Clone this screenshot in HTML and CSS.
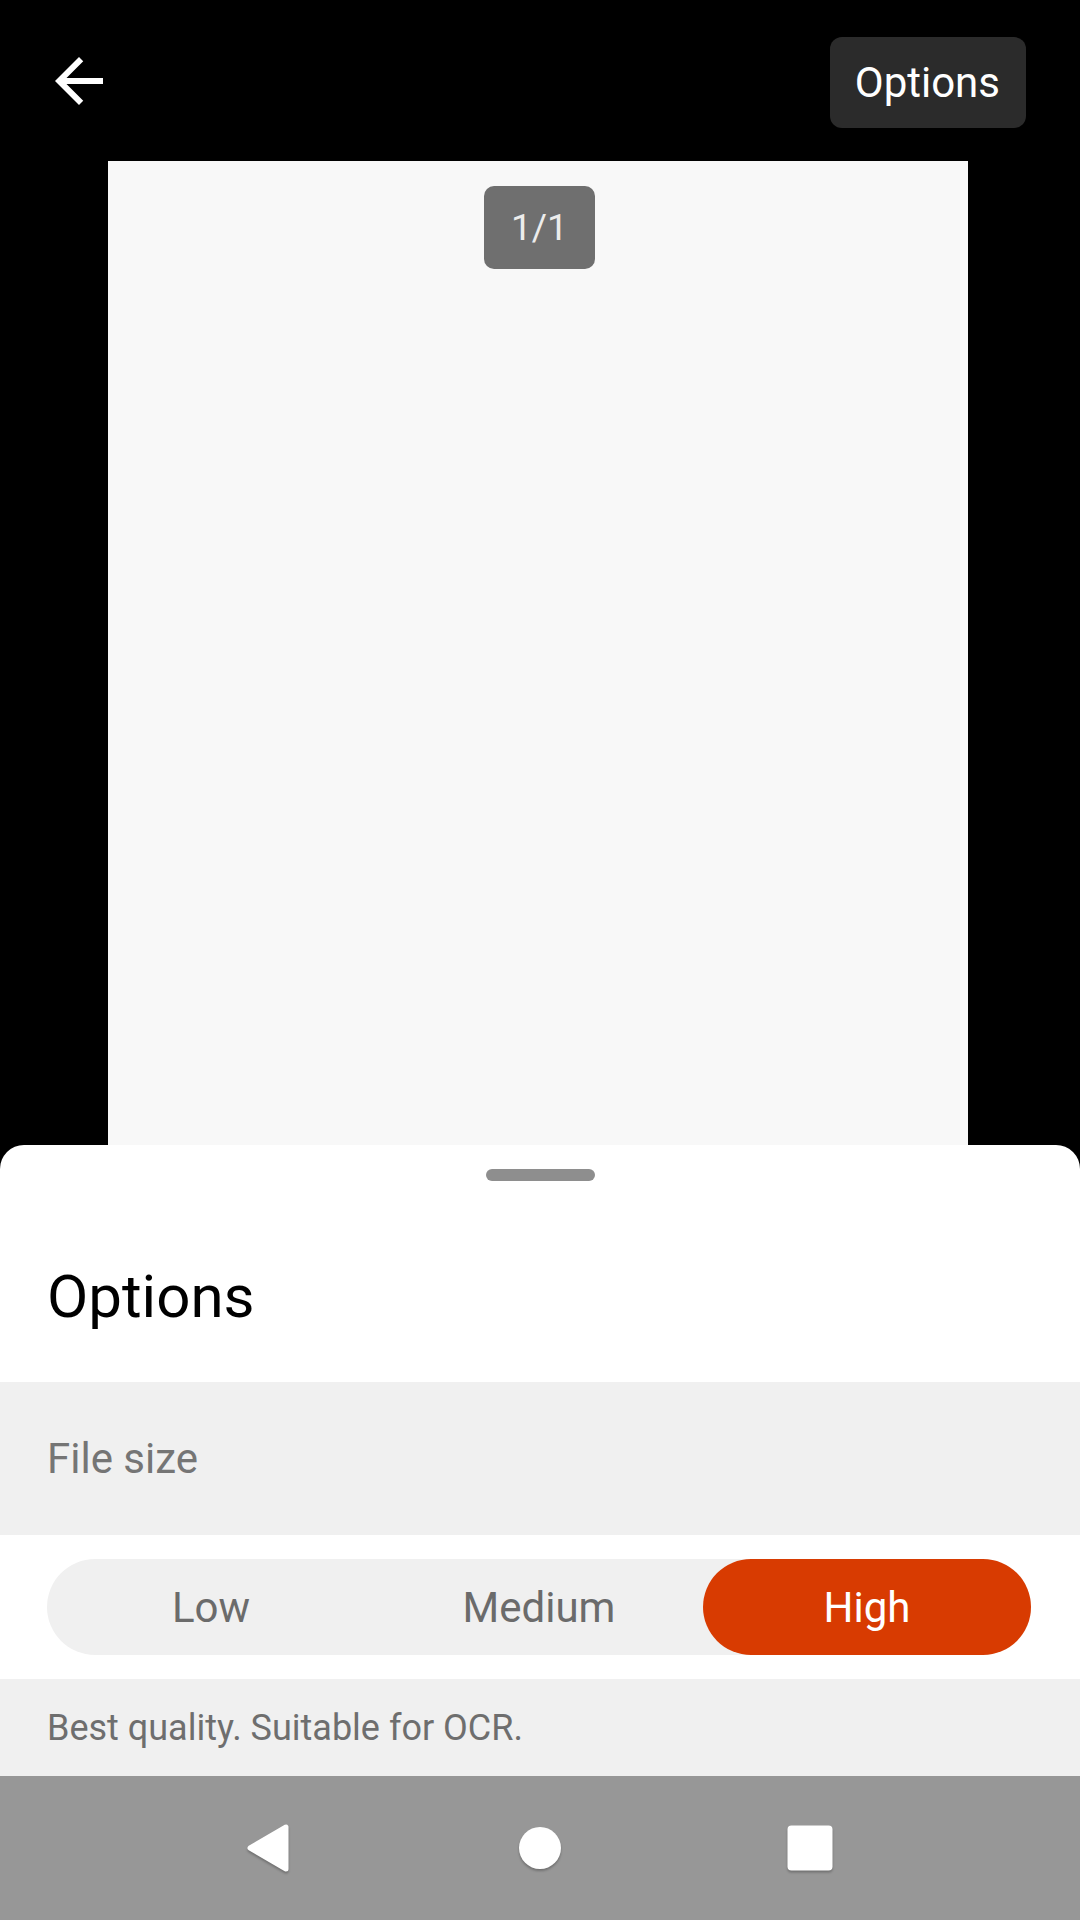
FILE: index.html
```html
<!DOCTYPE html>
<html lang="en">
<head>
<meta charset="utf-8">
<title>Options</title>
<link rel="stylesheet" href="styles.css">
</head>
<body>
<div class="screen">
  <header class="topbar">
    <svg class="back" viewBox="0 0 24 24" width="72" height="72" aria-label="Back">
      <path d="M20 11H7.83l5.59-5.59L12 4l-8 8 8 8 1.41-1.41L7.83 13H20v-2z" fill="#fff"/>
    </svg>
    <div class="options-btn">Options</div>
  </header>
  <main class="viewer">
    <div class="page">
      <div class="badge">1/1</div>
    </div>
  </main>
  <section class="sheet">
    <div class="handle-wrap"><div class="handle"></div></div>
    <h1 class="sheet-title">Options</h1>
    <div class="section-label">File size</div>
    <div class="segment-row">
      <div class="segmented">
        <div class="seg">Low</div>
        <div class="seg">Medium</div>
        <div class="seg active">High</div>
      </div>
    </div>
    <div class="desc">Best quality. Suitable for OCR.</div>
  </section>
  <nav class="navbar">
    <svg class="nav-icon" viewBox="0 0 48 48" width="48" height="48"><polygon points="40,3 40,45 4,24" fill="#fff" stroke="#fff" stroke-width="5" stroke-linejoin="round"/></svg>
    <svg class="nav-icon" viewBox="0 0 48 48" width="48" height="48"><circle cx="24" cy="24" r="21" fill="#fff"/></svg>
    <svg class="nav-icon" viewBox="0 0 48 48" width="48" height="48"><rect x="1.5" y="1.5" width="45" height="45" rx="4" fill="#fff"/></svg>
  </nav>
</div>
</body>
</html>
```

FILE: styles.css
```css
* { box-sizing: border-box; }
html, body {
  margin: 0;
  padding: 0;
  background: #000;
  font-family: Roboto, "Noto Sans", "Liberation Sans", sans-serif;
}
.screen {
  width: 1080px;
  height: 1920px;
  display: flex;
  flex-direction: column;
  overflow: hidden;
}
.topbar {
  height: 161px;
  flex: none;
  display: flex;
  align-items: center;
  justify-content: space-between;
  padding: 0 54px 0 43px;
}
.back { display: block; }
.options-btn {
  height: 91px;
  margin-top: 3px;
  padding: 0 26px 0 25px;
  background: #2b2b2b;
  border-radius: 12px;
  color: #fff;
  font-size: 42px;
  display: flex;
  align-items: center;
}
.viewer {
  flex: 1;
  display: flex;
  padding-left: 108px;
}
.page {
  width: 860px;
  background: #f8f8f8;
  display: flex;
  flex-direction: column;
  align-items: center;
  padding-top: 25px;
}
.badge {
  width: 111px;
  height: 83px;
  border-radius: 10px;
  background: #6f6f6f;
  color: #ececec;
  font-size: 37px;
  display: flex;
  align-items: center;
  justify-content: center;
  margin-left: 3px;
}
.sheet {
  flex: none;
  height: 631px;
  background: #fff;
  border-radius: 24px 24px 0 0;
  display: flex;
  flex-direction: column;
}
.handle-wrap {
  height: 36px;
  padding-top: 24px;
  display: flex;
  justify-content: center;
}
.handle {
  width: 109px;
  height: 12px;
  border-radius: 6px;
  background: #8e8e8e;
}
.sheet-title {
  margin: 79px 0 48px 47px;
  font-size: 60px;
  line-height: 74px;
  font-weight: 400;
  color: #000;
}
.section-label {
  height: 153px;
  background: #f0f0f0;
  color: #757575;
  font-size: 42px;
  display: flex;
  align-items: center;
  padding-left: 47px;
}
.segment-row {
  height: 144px;
  padding: 24px 49px 24px 47px;
  background: #fff;
}
.segmented {
  height: 96px;
  background: #f0f0f0;
  border-radius: 48px;
  display: grid;
  grid-template-columns: 1fr 1fr 1fr;
}
.seg {
  display: flex;
  align-items: center;
  justify-content: center;
  font-size: 42px;
  color: #6b6b6b;
  border-radius: 48px;
}
.seg.active {
  background: #d83b01;
  color: #fff;
}
.desc {
  height: 97px;
  background: #f0f0f0;
  color: #6e6e6e;
  font-size: 36px;
  display: flex;
  align-items: center;
  padding-left: 47px;
}
.navbar {
  flex: none;
  height: 144px;
  background: #979797;
  display: flex;
  align-items: center;
  justify-content: center;
  gap: 222px;
}
.nav-icon {
  display: block;
  filter: drop-shadow(0 2px 1px rgba(0,0,0,0.25));
}
```
